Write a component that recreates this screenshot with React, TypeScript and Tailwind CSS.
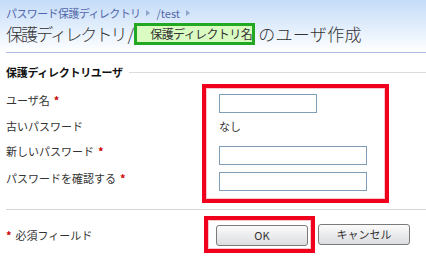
import React from 'react';

const font = { fontFamily: '"Noto Sans CJK JP", "Liberation Sans", sans-serif' };

function Asterisk() {
  return <span className="text-[#cc0000] font-bold ml-[4px]">*</span>;
}

function Crumb() {
  return (
    <svg width="6" height="8" viewBox="0 0 6 8" className="mx-[5px] inline-block">
      <path d="M1 1 L5 4 L1 7 Z" fill="#8fa3c8" />
    </svg>
  );
}

function Button({ label }: { label: string }) {
  return (
    <button className="w-[92px] h-[21px] rounded-[3px] border border-[#7a7a7a] bg-gradient-to-b from-[#fbfbfb] to-[#dcdde0] text-[11px] font-normal text-[#333] leading-none">
      {label}
    </button>
  );
}

export default function App() {
  return (
    <div className="w-[426px] h-[275px] bg-white text-[#333] overflow-hidden" style={font}>
      <div className="bg-gradient-to-b from-[#c4dcf8] to-white h-[53px]">
        <div className="ml-[6px] h-full pt-[6px] border-b border-[#aebde3]">
          <div className="flex items-center text-[11px] leading-[14px] text-[#5366aa]">
            <span className="tracking-[-0.6px]">パスワード保護ディレクトリ</span>
            <Crumb />
            <span>/test</span>
            <Crumb />
          </div>
          <div className="flex items-center mt-[3px] h-[21px]">
            <span className="text-[17px] tracking-[-1.9px] font-light text-[#333]">保護ディレクトリ /</span>
            <span className="ml-[2px] h-[22px] w-[121px] border-[3px] border-[#22a822] bg-[#dafcc2] pl-[13px] text-[12px] leading-[16px] tracking-[-0.6px] text-[#333]">
              保護ディレクトリ名
            </span>
            <span className="ml-[3px] text-[17px] font-light tracking-[0.3px] text-[#333]">のユーザ作成</span>
          </div>
        </div>
      </div>

      <div className="pl-[6px] text-[11px] leading-[14px]">
        <div className="flex items-center mt-[12px] h-[14px]">
          <span className="font-bold text-[#111] tracking-[-0.3px]">保護ディレクトリユーザ</span>
          <div className="flex-1 ml-[6px] border-t border-[#dcdcdc]" />
        </div>

        <div className="flex mt-[5px]">
          <div className="w-[196px] flex flex-col">
            <div className="mt-[9px]">ユーザ名<Asterisk /></div>
            <div className="mt-[12px]">古いパスワード</div>
            <div className="mt-[11px]">新しいパスワード<Asterisk /></div>
            <div className="mt-[13px]">パスワードを確認する<Asterisk /></div>
          </div>
          <div className="w-[187px] border-[4px] border-[#f0001c] pt-[6px] pl-[13px] pb-[8px] flex flex-col shadow-[inset_0_0_0_1px_#f6c6cc]">
            <div className="w-[98px] h-[19px] border border-[#7f9db9] bg-white" />
            <div className="mt-[6px]">なし</div>
            <div className="mt-[13px] w-[148px] h-[19px] border border-[#7f9db9] bg-white" />
            <div className="mt-[7px] w-[148px] h-[19px] border border-[#7f9db9] bg-white" />
          </div>
        </div>

        <div className="mt-[6px] border-t border-[#d4d4d4]" />

        <div className="flex items-center mt-[6px]">
          <div className="w-[198px]">
            <span className="text-[#cc0000] font-bold mr-[4px]">*</span>必須フィールド
          </div>
          <div className="border-[4px] border-[#f0001c] pt-[5px] pl-[8px] pr-[3px] pb-[3px] shadow-[inset_0_0_0_1px_#f6c6cc]">
            <Button label="OK" />
          </div>
          <div className="ml-[3px]">
            <Button label="キャンセル" />
          </div>
        </div>
      </div>
    </div>
  );
}
